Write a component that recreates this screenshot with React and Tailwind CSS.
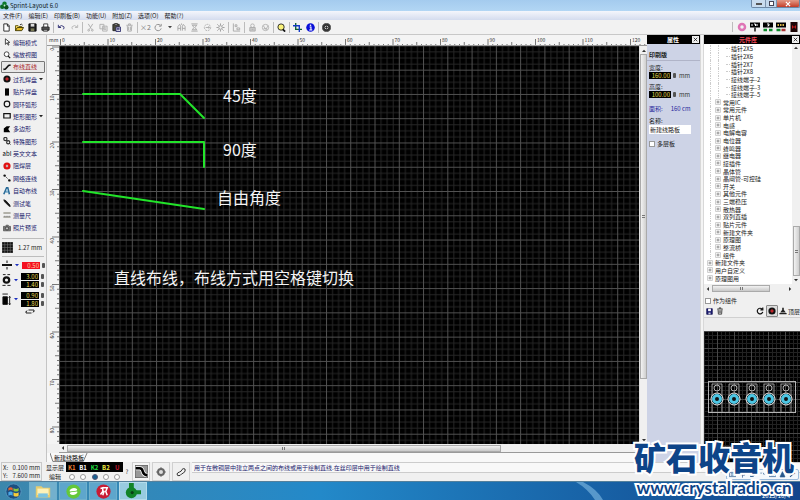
import React, { useState } from 'react';
import clsx from 'clsx';

const menus = ['文件(F)', '编辑(E)', '印刷板(B)', '功能(U)', '附加(Z)', '选项(O)', '帮助(?)'];

const Svg = ({ size = 'size-[10px]', children, ...rest }) => (
  <svg viewBox="0 0 20 20" className={clsx(size, 'block shrink-0')} fill="none" stroke="currentColor" strokeWidth="2" aria-hidden="true" {...rest}>
    {children}
  </svg>
);

const glyphs = {
  new: <path d="M4 2h8l4 4v12H4zM12 2v5h4" stroke="#222" fill="#fff" />,
  open: <><path d="M1 17V6h6l2 2h6v3" fill="#ffe36a" stroke="#554a00" /><path d="M1 17l4-7h14l-4 7z" fill="#e8bf28" stroke="#3c3500" /><path d="M11 4q4-3 6 1" stroke="#222" /></>,
  save: <><path d="M2 2h16v16H2z" fill="#222" stroke="#000" /><path d="M6 2h8v6H6z" fill="#ddd" stroke="none" /><path d="M6 12h8v6H6z" fill="#7a7a55" stroke="none" /></>,
  saveBlue: <><path d="M2 2h16v16H2z" fill="#1d1d70" stroke="#101050" /><path d="M6 2h8v7H6z" fill="#fff" stroke="none" /><path d="M7 13h6v5H7z" fill="#ccd" stroke="none" /></>,
  print: <><path d="M6 9V2h9v7" fill="#fff" stroke="#333" /><path d="M2 9h16v7H2z" fill="#555" stroke="#222" /><path d="M5 14h10v4H5z" fill="#ddd" stroke="#222" /></>,
  undo: <path d="M3 4v6h6M4 9q6-6 11-1q2 3-1 6" stroke="#28286e" />,
  redo: <path d="M17 4v6h-6M16 9q-6-6-11-1q-2 3 1 6" stroke="#b5b5b5" />,
  cut: <><path d="M5 2l7 11M15 2L8 13" stroke="#aaa" /><circle cx="6" cy="16" r="2" stroke="#aaa" /><circle cx="14" cy="16" r="2" stroke="#aaa" /></>,
  copy: <path d="M2 3h9v10H2zM8 7h10v11H8zM10 11h6M10 14h6" stroke="#b0b0b0" fill="#eee" />,
  paste: <><path d="M2 3h14v14H2z" fill="#4a4a3a" stroke="#222" /><path d="M6 1h6v4H6z" fill="#aaa" stroke="#333" /><path d="M9 9h10v10H9zM11 12h6M11 15h6" fill="#fff" stroke="#29296b" /></>,
  trash: <path d="M3 5h14M8 5V2h4v3M5 6l1 12h8l1-12M8 8v8M12 8v8" stroke="#aaa" />,
  trashDark: <path d="M3 5h14M8 5V2h4v3M5 6l1 12h8l1-12M8 8v8M12 8v8" stroke="#333" />,
  rotate: <path d="M16 12a7 7 0 1 1-2-7M16 2v5h-5" stroke="#888" />,
  rotateDark: <path d="M17 12a7 7 0 1 1-2-7M17 1v6h-6" stroke="#111" strokeWidth="3" />,
  mirror: <path d="M2 17V8l4-5 2 4v10M18 17V8l-4-5-2 4v10M2 12h6M12 12h6M10 1v3" stroke="#a5a5a5" />,
  flip: <path d="M3 2h14M3 18h14M5 5h10l-4 5 4 5H5l4-5z" stroke="#a5a5a5" />,
  loop: <><circle cx="10" cy="10" r="7" stroke="#aaa" strokeDasharray="4 2" /><path d="M6 10h8M12 7l3 3-3 3" stroke="#aaa" /></>,
  sun: <><circle cx="10" cy="10" r="4" stroke="#999" /><path d="M10 1v4M10 15v4M1 10h4M15 10h4M3 3l3 3M14 14l3 3M17 3l-3 3M3 17l3-3" stroke="#999" /></>,
  align: <path d="M3 1v17h15M7 4h4v4H7zM11 11h6v4h-6z" stroke="#a8a8a8" />,
  lock: <><circle cx="10" cy="6" r="4" stroke="#b0b0b0" /><path d="M4 10h12v8H4zM8 14h4" fill="#ccc" stroke="#aaa" /></>,
  hatch: <><circle cx="10" cy="10" r="7" stroke="#b0b0b0" /><path d="M5 6l6 8 5-8M6 12l8 2" stroke="#b0b0b0" /></>,
  zoom: <><circle cx="9" cy="9" r="7" fill="#fbf37a" stroke="#222" /><path d="M13 14l5 5" stroke="#111" strokeWidth="4" /></>,
  crop: <><path d="M6 0v14h14" stroke="#0d5f33" strokeWidth="3" /><path d="M0 6h14v14" stroke="#1238c6" strokeWidth="3" /></>,
  info: <><circle cx="10" cy="10" r="9.5" fill="#0a10d8" stroke="none" /><path d="M8 9h3v6M7 15.500h7" stroke="#fff" strokeWidth="2.500" /><circle cx="10" cy="5" r="1.800" fill="#fff" stroke="none" /></>,
  target: <><circle cx="10" cy="10" r="9" fill="#333" stroke="#555" /><circle cx="10" cy="10" r="4" fill="#ddd" stroke="none" /><path d="M10 7v6M7 10h6" stroke="#222" /></>,
  pink: <circle cx="10" cy="10" r="6" stroke="#df75b5" strokeWidth="5" />,
  cam1: <><path d="M0 1h20v10H0z" fill="#000" stroke="none" /><path d="M4 4v4M8 4h3v4M14 4v4" stroke="#fff" /><path d="M10 11v8" stroke="#111" strokeWidth="3" /></>,
  cam2: <><path d="M0 1h20v10H0z" fill="#000" stroke="none" /><path d="M8 4h4v3h-2v2" stroke="#fff" /><path d="M1 16h7M12 16h7" stroke="#0b8a2a" strokeWidth="5" /></>,
  cam3: <><path d="M0 1h20v10H0z" fill="#000" stroke="none" /><path d="M3 6h14" stroke="#d9b54a" strokeWidth="4" strokeDasharray="3 2" /><path d="M1 16h8" stroke="#0b8a2a" strokeWidth="5" /><path d="M11 16h8" stroke="#a33" strokeWidth="5" /></>,
  cam4: <><path d="M3 0h14v20H3z" fill="#1c0505" stroke="none" /><path d="M7 7v6M7 10h6M13 7v6" stroke="#c01818" strokeWidth="2" /></>,
  cursor: <path d="M6 2v14l4-4 3 6 2-1-3-6h5z" fill="#fff" stroke="#222" />,
  lens: <><circle cx="9" cy="8" r="6" stroke="#222" fill="#fff" /><path d="M13 13l5 5" stroke="#111" strokeWidth="3" /></>,
  line: <path d="M1 16l5-1 8-9 5-1" stroke="#111" strokeWidth="4" />,
  pad: <><circle cx="10" cy="10" r="9" fill="#111" stroke="none" /><circle cx="10" cy="10" r="3" fill="#a01020" stroke="#d33" /></>,
  smd: <path d="M5 1h10v18H5z" fill="#050505" stroke="none" />,
  ring: <circle cx="10" cy="10" r="7" stroke="#111" strokeWidth="3" />,
  rect: <path d="M2 4h16v11H2z" stroke="#111" strokeWidth="3" />,
  poly: <path d="M2 18V9l7-6h9l-5 7 5 8z" fill="#000" stroke="none" />,
  special: <><circle cx="6" cy="5" r="4" stroke="#333" strokeWidth="3" /><circle cx="13" cy="13" r="4" stroke="#333" strokeWidth="3" /><path d="M9 8l3 3M17 17l2 2" stroke="#222" /></>,
  mask: <><circle cx="10" cy="10" r="6" fill="#fff" stroke="#e01010" strokeWidth="6" /><path d="M8 10h4" stroke="#500" /></>,
  net: <><path d="M4 4l12 12" stroke="#333" strokeDasharray="3 2" /><circle cx="4" cy="4" r="3" fill="#111" stroke="none" /><circle cx="16" cy="16" r="3" fill="#111" stroke="none" /></>,
  auto: <><path d="M2 18L9 2h3l4 16M6 12h8" stroke="#2c6c99" strokeWidth="4" /><path d="M7 15l3-9 2 9" stroke="#9cc8df" /></>,
  probe: <path d="M2 2l5 2 10 11 1 4-4-2L4 7z" fill="#111" stroke="#111" />,
  measure: <><path d="M1 5h18M1 15h18" stroke="#54523c" /><path d="M4 12v3M8 12v3M12 12v3M16 12v3" stroke="#888" /></>,
  photo: <><path d="M1 6h5l2-3h5l2 3h4v11H1z" fill="#777" stroke="#555" /><circle cx="10" cy="11" r="4" fill="#bbb" stroke="#333" /></>,
};

const Glyph = ({ name, size }) => <Svg size={size}>{glyphs[name]}</Svg>;

const toolbar = [
  ['new', 'open', 'save', 'print'],
  ['undo', 'redo'],
  ['cut', 'copy', 'paste', 'trash'],
  ['x2', 'rotate', 'more', 'mirror', 'flip', 'loop', 'sun'],
  ['align'],
  ['lock', 'hatch'],
  ['zoom'],
  ['crop', 'info'],
  ['target'],
];

const tools = [
  { icon: 'cursor', label: '编辑模式' },
  { icon: 'lens', label: '缩放视图' },
  { icon: 'line', label: '布线直线' },
  { icon: 'pad', label: '过孔焊盘', drop: true },
  { icon: 'smd', label: '贴片焊盘' },
  { icon: 'ring', label: '圆环弧形' },
  { icon: 'rect', label: '矩形图形', drop: true },
  { icon: 'poly', label: '多边形' },
  { icon: 'special', label: '特殊图形' },
  { icon: 'text', label: '英文文本' },
  { icon: 'mask', label: '阻焊层' },
  { icon: 'net', label: '网络连线' },
  { icon: 'auto', label: '自动布线' },
  { icon: 'probe', label: '测试笔' },
  { icon: 'measure', label: '测量尺' },
  { icon: 'photo', label: '照片预览' },
];

const leaves = ['插针2X5', '插针2X6', '插针2X7', '插针2X8', '接线端子-2', '接线端子-3', '接线端子-5'];
const groups = [
  '常用IC', '常用元件', '单片机', '电感', '电解电容', '电位器', '蜂鸣器', '继电器', '接插件', '晶体管', '晶闸管-可控硅',
  '开关', '其他元件', '三端稳压', '散热器', '双列直插', '贴片元件', '新建文件夹', '原理图', '整流桥', '组件',
];
const roots = ['新建文件夹', '用户自定义', '原理图用'];

const layers = [
  { name: 'K1', color: 'text-[#f08030]' },
  { name: 'B1', color: 'text-white' },
  { name: 'K2', color: 'text-[#20e040]' },
  { name: 'B2', color: 'text-[#f0e840]' },
  { name: 'U', color: 'text-[#c01830]' },
];

function TitleBar() {
  return (
    <header className="flex h-[11px] items-center gap-px bg-linear-to-b from-[#a4cbee] to-[#b2d6f4]">
      <Svg size="size-[9px]" stroke="none">
        <circle cx="10" cy="6" r="5" fill="#0c7a2c" />
        <circle cx="5" cy="13" r="5" fill="#0a6a24" />
        <circle cx="14" cy="14" r="5" fill="#094f1c" />
        <circle cx="10" cy="10" r="2" fill="#bfe8c4" />
      </Svg>
      <h1 className="text-[6px] leading-[9px] text-[#101820]">Sprint-Layout 6.0</h1>
      <div className="ml-auto flex h-[8px] self-start overflow-hidden rounded-b-[2px] border border-t-0 border-[#6c87a5]">
        <button aria-label="最小化" className="flex w-[13px] items-end justify-center bg-[#c9dcef] pb-[2px]">
          <span className="h-[2px] w-[6px] border border-[#555] bg-white" />
        </button>
        <button aria-label="还原" className="flex w-[12px] items-center justify-center border-x border-[#7c93ad] bg-[#c2d7ec]">
          <span className="size-[5px] border border-[#445] bg-white" />
        </button>
        <button aria-label="关闭" className="flex w-[22px] items-center justify-center bg-linear-to-b from-[#e29a88] to-[#c33a26]">
          <Svg size="size-[6px]" stroke="#fff" strokeWidth="4"><path d="M3 3l14 14M17 3L3 17" /></Svg>
        </button>
      </div>
    </header>
  );
}

function Toolbar() {
  return (
    <div className="flex h-[15px] items-center border-b border-[#c8c8c8] bg-[#f2f2f2]">
      {toolbar.map((group, i) => (
        <div key={i} className="flex items-center">
          {i > 0 && <span className="mx-px h-[11px] w-px bg-[#bcbcbc]" />}
          {group.map((name) =>
            name === 'more' ? (
              <button key={name} aria-label={name} className="flex w-[10px] justify-center">
                <Svg size="size-[4px]" stroke="none"><path d="M0 5h20L10 16z" fill="#444" /></Svg>
              </button>
            ) : (
              <button key={name} aria-label={name} className="flex h-[13px] w-[13px] items-center justify-center text-[7px] leading-[11px] text-[#777]">
                {name === 'x2' ? '×2' : <Glyph name={name} size="size-[9px]" />}
              </button>
            )
          )}
        </div>
      ))}
      <div className="ml-auto flex items-center border-l border-[#bcbcbc] pl-[2px]">
        {['pink', 'cam1', 'cam2', 'cam3', 'cam4'].map((name) => (
          <button key={name} aria-label={name} className="flex w-[13px] justify-center">
            <Glyph name={name} size="size-[10px]" />
          </button>
        ))}
      </div>
    </div>
  );
}

const Stepper = () => <span className="h-[5px] w-[3px] rounded-[1px] bg-[#555]" />;

function ValueBox({ label, value, red }) {
  return (
    <div className="flex items-center gap-[2px]">
      <input
        aria-label={label}
        defaultValue={value}
        className={clsx('h-[7px] w-[18px] pr-px text-right text-[6px] leading-[7px]', red ? 'bg-[#f41020] text-[#ffd0a0]' : 'bg-black text-[#e4dc50]')}
      />
      <Stepper />
    </div>
  );
}

const BlueCaret = () => (
  <Svg size="size-[4px]" stroke="none"><path d="M0 5h20L10 16z" fill="#1c2fc0" /></Svg>
);

function Sidebar({ tool, setTool }) {
  return (
    <aside className="flex w-[47px] shrink-0 flex-col border-r border-[#c4c4c4] bg-[#f0f0f0]">
      <nav className="mt-px flex h-[198px] flex-col">
        {tools.map((t) => (
          <button
            key={t.label}
            onClick={() => setTool(t.label)}
            className={clsx(
              'mx-px flex flex-1 items-center rounded-[1px] border text-[6px] leading-[9px]',
              tool === t.label ? 'border-[#777] bg-[#e8e8e8] text-[#a81c28]' : 'border-transparent text-[#20206c]'
            )}
          >
            <span className="flex w-[10px] items-center justify-center">
              {t.icon === 'text' ? <span className="text-[6px] text-black">abI</span> : <Glyph name={t.icon} size="size-[8px]" />}
            </span>
            <span className="pl-px">{t.label}</span>
            {t.drop && <span className="ml-auto pr-px"><Svg size="size-[4px]" stroke="none"><path d="M0 5h20L10 16z" fill="#222" /></Svg></span>}
          </button>
        ))}
      </nav>
      <button className="mx-[2px] mt-1 flex h-[19px] items-center gap-[5px] border-y border-[#bdbdbd] text-[6px] text-[#222]">
        <Svg size="size-[11px]" stroke="#777" strokeWidth="1">
          <path d="M0 0h20v20H0z" fill="#111" />
          <path d="M5 0v20M10 0v20M15 0v20M0 5h20M0 10h20M0 15h20" />
        </Svg>
        1.27 mm
      </button>
      <div className="mx-[2px] mt-1 flex flex-col gap-[3px]">
        <div className="flex h-[8px] items-center gap-[3px]">
          <Svg><path d="M0 10h20" strokeWidth="4" stroke="#111" /><path d="M10 1v5M10 19v-5" stroke="#111" /></Svg>
          <BlueCaret />
          <ValueBox label="线宽" value="0.50" red />
        </div>
        <div className="flex h-[16px] items-center gap-[3px]">
          <svg viewBox="0 0 20 28" className="h-[14px] w-[10px]" fill="none" stroke="#111" strokeWidth="2" aria-hidden="true">
            <path d="M2 2h6M12 2h6M1 26h7M12 26h7" />
            <circle cx="10" cy="14" r="6" strokeWidth="5" />
          </svg>
          <BlueCaret />
          <div className="flex flex-col gap-px">
            <ValueBox label="焊盘外径" value="3.00" />
            <ValueBox label="焊盘内径" value="1.40" />
          </div>
        </div>
        <div className="flex h-[16px] items-center gap-[3px]">
          <svg viewBox="0 0 20 28" className="h-[14px] w-[10px]" stroke="#111" strokeWidth="2" aria-hidden="true">
            <path d="M1 3h12M17 9v17M15 11l2-3 2 3M15 24l2 3 2-3" fill="none" />
            <path d="M2 9h10v17H2z" fill="#000" />
          </svg>
          <BlueCaret />
          <div className="flex flex-col gap-px">
            <ValueBox label="贴片宽度" value="0.90" />
            <ValueBox label="贴片高度" value="1.80" />
          </div>
        </div>
      </div>
      <button aria-label="交换" className="mt-[2px] ml-[25px] w-[10px]">
        <svg viewBox="0 0 20 10" className="h-[5px] w-[10px]" fill="none" stroke="#222" strokeWidth="2" aria-hidden="true">
          <path d="M7 2h11v3M13 8H2V5M4 3L2 6M16 7l2-3" />
        </svg>
      </button>
    </aside>
  );
}

const STEP = 47.5;
const marks = Array.from({ length: 400 }, (_, i) => i);

function tickLength(i) {
  if (i % 10 === 0) return 7;
  return i % 5 === 0 ? 4 : 2;
}

function RulerTop() {
  return (
    <div className="flex h-[11px] border-b border-[#999] bg-[#f4f4f4]">
      <span className="w-[12px] shrink-0 pl-[2px] text-[5px] leading-[10px] text-[#333]">mm</span>
      <svg className="h-full w-0 flex-1" aria-hidden="true">
        {marks.map((i) => (
          <path key={i} d={`M${1.5 + (i * STEP) / 10} 11v-${tickLength(i)}`} stroke="#777" strokeWidth="1" />
        ))}
        {marks.filter((i) => i % 10 === 0 && i < 130).map((i) => (
          <text key={i} x={3 + (i * STEP) / 10} y="7" fontSize="5" fill="#333">{i}</text>
        ))}
      </svg>
    </div>
  );
}

function RulerLeft() {
  return (
    <svg className="w-[12px] shrink-0 self-stretch bg-[#f4f4f4]" height="100%" aria-hidden="true">
      {marks.map((i) => (
        <path key={i} d={`M12 ${1 + (i * STEP) / 10}h-${tickLength(i)}`} stroke="#777" strokeWidth="1" />
      ))}
      {marks.filter((i) => i % 10 === 0 && i < 90).map((i) => (
        <text key={i} transform={`translate(7 ${2 + (i * STEP) / 10}) rotate(-90)`} textAnchor="end" fontSize="5" fill="#333">{i}</text>
      ))}
    </svg>
  );
}

// board coordinates, origin at the upper left corner of the sheet
function Board() {
  return (
    <div className="relative h-full w-0 flex-1 bg-black">
      <svg className="absolute inset-0 size-full" role="img" aria-label="新建线路板">
        <defs>
          <pattern id="grid" width="24.27" height="24.27" patternUnits="userSpaceOnUse" y="-0.600">
            <path d="M6.570 0v24.270M12.630 0v24.270M18.700 0v24.270M0 6.570h24.270M0 12.630h24.270M0 18.700h24.270" stroke="#262626" strokeWidth="1" />
            <path d="M0.500 0v24.270M0 0.500h24.270" stroke="#525252" strokeWidth="1" />
          </pattern>
        </defs>
        <rect width="100%" height="100%" fill="url(#grid)" />
        <g fill="none" stroke="#22e42a" strokeWidth="2" strokeLinecap="round" strokeLinejoin="round">
          <path d="M24 48H121L145 72" />
          <path d="M24 96H145V121" />
          <path d="M24 145L145 163" />
        </g>
        <g fill="#f4f4f4" fontSize="16">
          <text x="164" y="56">45度</text>
          <text x="164" y="110">90度</text>
          <text x="158" y="158">自由角度</text>
          <text x="55" y="238">直线布线，布线方式用空格键切换</text>
        </g>
      </svg>
    </div>
  );
}

const Arrow = ({ d }) => (
  <Svg size="size-[4px]" stroke="none"><path d={d} fill="#333" /></Svg>
);

function Workspace() {
  return (
    <main className="flex w-0 flex-1 flex-col bg-[#f0f0f0]">
      <RulerTop />
      <div className="flex min-h-0 flex-1">
        <RulerLeft />
        <Board />
        <div className="flex w-[8px] flex-col items-center border-l border-[#ddd] bg-[#f0f0f0] py-px">
          <span className="flex h-[7px] items-center"><Arrow d="M0 15h20L10 4z" /></span>
          <div className="flex h-[82%] w-[7px] flex-col items-center justify-center gap-px border border-[#aaa] bg-linear-to-r from-[#f2f2f2] to-[#cfcfcf]">
            <span className="h-px w-[3px] bg-[#777]" />
            <span className="h-px w-[3px] bg-[#777]" />
          </div>
          <span className="mt-auto flex h-[7px] items-center"><Arrow d="M0 5h20L10 16z" /></span>
        </div>
      </div>
      <div className="ml-[12px] flex h-[9px] items-center border-b border-[#999] bg-[#f0f0f0] pr-[10px]">
        <span className="flex w-[8px] justify-center"><Arrow d="M15 0v20L4 10z" /></span>
        <div className="flex h-[7px] w-3/4 items-center justify-center gap-px border border-[#aaa] bg-linear-to-b from-[#f2f2f2] to-[#c8c8c8]">
          <span className="h-[3px] w-px bg-[#777]" />
          <span className="h-[3px] w-px bg-[#777]" />
        </div>
      </div>
      <div className="flex h-[9px] bg-[#f8f8f8] pl-[3px]">
        <button className="relative flex items-center px-[4px] text-[6px] leading-[9px] text-black">
          <svg viewBox="0 0 40 8" preserveAspectRatio="none" className="absolute inset-0 size-full" aria-hidden="true">
            <path d="M0 0l3 7.500h32L39 0" fill="none" stroke="#555" strokeWidth="0.700" />
          </svg>
          <span className="relative">新建线路板</span>
        </button>
      </div>
    </main>
  );
}

function PanelHeader({ title, className }) {
  return (
    <div className="flex h-[9px] shrink-0 items-center bg-black">
      <h2 className={clsx('flex-1 text-center text-[6px] leading-[9px] font-bold', className)}>{title}</h2>
      <button aria-label="关闭" className="mr-px flex size-[7px] items-center justify-center bg-[#f0f0f0]">
        <Svg size="size-[5px]" stroke="#111" strokeWidth="3"><path d="M3 3l14 14M17 3L3 17" /></Svg>
      </button>
    </div>
  );
}

function SizeField({ id, label, value }) {
  return (
    <div className="mb-[3px]">
      <label htmlFor={id} className="block leading-[9px]">{label}</label>
      <div className="flex items-center gap-[2px] text-[#333]">
        <input id={id} defaultValue={value} className="h-[7px] w-[22px] bg-black pr-px text-right leading-[7px] text-[#e4dc50]" />
        <Stepper />
        <span className="pl-px leading-[7px]">mm</span>
      </div>
    </div>
  );
}

function Properties() {
  return (
    <section className="flex w-[53px] shrink-0 flex-col bg-[#cdd3e6] text-[6px] text-[#181818]">
      <PanelHeader title="属性" className="pl-[7px] text-white" />
      <h3 className="mt-[6px] border-b border-[#b0b4c8] pb-px pl-[2px] text-[6px] leading-[9px] font-bold">印刷版</h3>
      <div className="px-[2px] pt-[2px]">
        <SizeField id="board-w" label="宽度:" value="160.00" />
        <SizeField id="board-h" label="高度:" value="100.00" />
        <p className="mt-[6px] flex gap-[8px] leading-[9px] text-[#28289c]">
          <span>面积:</span>
          <span>160 cm</span>
        </p>
        <label htmlFor="board-name" className="mt-[3px] block leading-[9px]">名称:</label>
        <input id="board-name" defaultValue="新建线路板" className="h-[9px] w-[42px] bg-white pl-px leading-[9px]" />
        <label className="mt-[5px] flex items-center gap-[2px] leading-[9px]">
          <input type="checkbox" className="size-[6px] appearance-none border border-[#999] bg-white" />
          多层板
        </label>
      </div>
    </section>
  );
}

const Expander = () => (
  <Svg size="size-[6px]" stroke="#aaa" strokeWidth="2"><path d="M2 2h16v16H2z" fill="#fff" /><path d="M5 10h10M10 5v10" stroke="#555" /></Svg>
);

function Tree() {
  return (
    <div className="flex h-[240px] bg-white">
      <ul className="flex flex-1 flex-col pt-px pb-[2px] text-[6px] leading-[7px] whitespace-nowrap text-[#181818]">
        {leaves.map((name) => (
          <li key={name} className="flex flex-1 items-center">
            <span className="ml-[6px] h-full w-[8px] border-l border-dotted border-[#ccc]" />
            <span className="h-full w-[8px] border-l border-dotted border-[#ccc]" />
            <span className="mr-px w-[4px] border-b border-dotted border-[#ccc]" />
            {name}
          </li>
        ))}
        {groups.map((name) => (
          <li key={name} className="flex flex-1 items-center">
            <span className="ml-[6px] h-full w-[5px] border-l border-dotted border-[#ccc]" />
            <button className="flex items-center gap-[2px]"><Expander />{name}</button>
          </li>
        ))}
        {roots.map((name) => (
          <li key={name} className="flex flex-1 items-center pl-[3px]">
            <button className="flex items-center gap-[2px]"><Expander />{name}</button>
          </li>
        ))}
      </ul>
      <div className="flex w-[8px] flex-col items-center bg-[#f0f0f0] py-[2px]">
        <Arrow d="M0 15h20L10 4z" />
        <div className="mt-auto mb-[2px] flex h-[50px] w-[7px] flex-col items-center justify-center gap-px border border-[#aaa] bg-linear-to-r from-[#f2f2f2] to-[#cfcfcf]">
          <span className="h-px w-[3px] bg-[#777]" />
          <span className="h-px w-[3px] bg-[#777]" />
        </div>
        <Arrow d="M0 5h20L10 16z" />
      </div>
    </div>
  );
}

const pins = [13, 30, 48, 65, 82];

function Preview() {
  return (
    <svg className="min-h-0 w-full flex-1 bg-black" role="img" aria-label="插针">
      <defs>
        <pattern id="fine" width="17" height="17" patternUnits="userSpaceOnUse" x="13">
          <path d="M4.500 0v17M8.500 0v17M12.500 0v17M0 4.500h17M0 8.500h17M0 12.500h17" stroke="#222" />
          <path d="M0.500 0v17M0 0.500h17" stroke="#474747" />
        </pattern>
      </defs>
      <rect width="100%" height="100%" fill="url(#fine)" />
      <g fill="none" stroke="#b4b4b4">
        <rect x="4.500" y="50.500" width="87" height="31" />
        {pins.map((x) => (
          <g key={x}>
            <path d={`M${x - 5} 81V53h10V81`} strokeWidth="0.800" />
            <circle cx={x} cy="57" r="3" />
            <circle cx={x} cy="68" r="6" fill="#111" stroke="#f4f4f4" />
            <circle cx={x} cy="68" r="3.500" stroke="#4cc6e4" strokeWidth="3" />
          </g>
        ))}
      </g>
    </svg>
  );
}

function Library() {
  return (
    <section className="flex w-[96px] shrink-0 flex-col bg-[#f0f0f0]">
      <PanelHeader title="元件库" className="text-[#f04858]" />
      <Tree />
      <div className="flex h-[9px] items-center bg-[#f0f0f0] pr-[8px]">
        <span className="flex w-[8px] justify-center"><Arrow d="M15 0v20L4 10z" /></span>
        <div className="flex h-[7px] w-[58px] items-center justify-center gap-px border border-[#aaa] bg-linear-to-b from-[#f2f2f2] to-[#c8c8c8]">
          <span className="h-[3px] w-px bg-[#777]" />
          <span className="h-[3px] w-px bg-[#777]" />
        </div>
        <span className="ml-auto"><Arrow d="M5 0v20L16 10z" /></span>
      </div>
      <label className="mt-[3px] flex items-center gap-[2px] pl-px text-[6px] leading-[9px] text-[#222]">
        <input type="checkbox" className="size-[6px] appearance-none border border-[#999] bg-white" />
        作为组件
      </label>
      <div className="flex h-[12px] items-center text-[6px] leading-[9px] text-[#222]">
        <button aria-label="保存" className="ml-[2px]"><Glyph name="saveBlue" size="size-[7px]" /></button>
        <button aria-label="删除" className="ml-[3px]"><Glyph name="trashDark" size="size-[8px]" /></button>
        <button aria-label="旋转" className="ml-auto"><Glyph name="rotateDark" size="size-[8px]" /></button>
        <button aria-label="焊盘" className="ml-[2px] rounded-[1px] border border-[#888] bg-[#ddd] p-px"><Glyph name="pad" size="size-[8px]" /></button>
        <button className="ml-px flex items-center gap-px whitespace-nowrap">
          <Svg size="size-[8px]" stroke="none"><path d="M8 2h4v5l5 7H3l5-7zM1 15h18v3H1z" fill="#222" /></Svg>
          顶层
        </button>
      </div>
      <div className="h-[14px] border-t border-[#d0d0d0] bg-[#ececec]" />
      <Preview />
    </section>
  );
}

function StatusBar({ layer, setLayer }) {
  return (
    <footer className="flex h-[19px] items-stretch bg-[#f0f0f0] text-[6px] text-[#181818]">
      <dl className="ml-px grid w-[41px] grid-cols-[6px_1fr] content-center border border-[#c8c8c8] px-px leading-[8px] whitespace-nowrap">
        <dt>X:</dt><dd className="text-right">0.100 mm</dd>
        <dt>Y:</dt><dd className="text-right">7.600 mm</dd>
      </dl>
      <div className="ml-[2px] flex w-[22px] flex-col items-center justify-center leading-[9px]">
        <span>显示层</span>
        <span>编辑</span>
      </div>
      <div className="flex w-[57px]">
        {layers.map((l) => (
          <label key={l.name} className="flex flex-1 flex-col items-center">
            <span className={clsx('flex h-[10px] w-full items-center justify-center bg-black leading-[9px] font-bold', l.color)}>{l.name}</span>
            <input
              type="radio"
              name="layer"
              checked={layer === l.name}
              onChange={() => setLayer(l.name)}
              className="mt-[2px] size-[6px] appearance-none rounded-full border border-[#999] bg-white checked:border-[#557] checked:bg-[#186090]"
            />
          </label>
        ))}
      </div>
      <button aria-label="帮助" className="w-[8px] text-[#333]">?</button>
      <div className="ml-px flex gap-[2px]">
        <button aria-label="布线" className="flex w-[18px] items-center justify-center border border-[#d0d0d0] bg-[#f6f6f6]">
          <Svg size="size-[13px]"><path d="M0 0h20v20H0z" fill="#999" stroke="#666" /><path d="M1 5h6q4 0 5 5t7 6" stroke="#fff" strokeWidth="6" /><path d="M1 5h6q4 0 5 5t7 6" stroke="#000" strokeWidth="4" /></Svg>
        </button>
        <button aria-label="焊盘" className="flex w-[18px] items-center justify-center border border-[#d0d0d0]">
          <Svg><path d="M10 0v20M0 10h20" stroke="#777" /><circle cx="10" cy="10" r="6" stroke="#666" strokeWidth="4" fill="#ddd" /></Svg>
        </button>
        <button aria-label="走线" className="flex w-[18px] items-center justify-center border border-[#d0d0d0]">
          <Svg><path d="M2 14q0 5 6 3 3-4 7-5 5-4 3-8-4-2-6 1-1 4-5 5-4 1-5 4z" stroke="#333" /></Svg>
        </button>
      </div>
      <div className="ml-[2px] flex-1">
        <p className="border-y border-[#ccc] bg-[#f8f8f8] pl-[2px] leading-[9px] text-[#20206c]">
          用于在敷铜层中建立两点之间的布线或用于绘制直线.在丝印层中用于绘制直线
        </p>
      </div>
    </footer>
  );
}

function Taskbar() {
  return (
    <div className="flex h-[19px] items-stretch gap-[2px] border-t border-[#54809c] bg-linear-to-r from-[#3c87ac] via-[#2389c9] via-40% to-[#12458c]">
      <button aria-label="开始" className="flex w-[27px] items-center justify-center">
        <Svg size="size-[17px]" stroke="none">
          <circle cx="10" cy="10" r="9" fill="#1c4f80" stroke="#5c9cc4" strokeWidth="1" />
          <path d="M4 6q3-2 5 0v3q-2-2-5 0z" fill="#e8602c" />
          <path d="M10 6q3 2 6 0v3q-3 2-6 0z" fill="#8cc63c" />
          <path d="M4 11q3-2 5 0v4q-2-2-5 0z" fill="#48a8e8" />
          <path d="M10 11q3 2 6 0v4q-3 2-6 0z" fill="#f8cc38" />
        </Svg>
      </button>
      <button aria-label="资源管理器" className="flex w-[28px] items-center justify-center border border-[#6fb0cc] bg-[#73b0cd]">
        <Svg size="size-[16px]" stroke="none"><path d="M1 4h7l2 2h9v12H1z" fill="#e5cc70" /><path d="M3 7h14v8H3z" fill="#fdf2b8" /><path d="M4 13h12v5H4z" fill="#7cc4e0" /></Svg>
      </button>
      <button aria-label="浏览器" className="flex w-[28px] items-center justify-center border border-[#6fb0cc] bg-[#5ea6cc]">
        <Svg size="size-[15px]" stroke="none"><circle cx="10" cy="10" r="9.500" fill="#64c83a" /><path d="M5 8q5-5 10-1l-1 2-9 1zM15 12q-5 5-10 1l1-2 9-1z" fill="#fff" /></Svg>
      </button>
      <button aria-label="音乐" className="flex w-[28px] items-center justify-center border border-[#6fb0cc] bg-[#5ea6cc]">
        <Svg size="size-[15px]" stroke="none"><circle cx="10" cy="10" r="9.500" fill="#c81c34" /><path d="M6 6l3-1v5l-3 4M10 5h5l-2 5 2 5M11 9l-2 6" fill="none" stroke="#fff" strokeWidth="2" /></Svg>
      </button>
      <button aria-label="Sprint-Layout" className="flex w-[28px] items-center justify-center border border-[#b4dcec] bg-[#98cbe0]">
        <Svg size="size-[16px]" stroke="none"><circle cx="8" cy="12" r="7" fill="#128428" /><path d="M5 0h6v8H5zM12 9h8v5h-8z" fill="#128428" /><circle cx="9" cy="12" r="2" fill="#0a4014" /></Svg>
      </button>
      <div className="flex flex-1 justify-end pr-[140px]">
        <svg viewBox="0 0 60 18" className="h-full w-[60px]" aria-hidden="true">
          <path d="M16 0h7q14 7 20 18h-8Q28 7 16 0z" fill="#8cc4ea" opacity="0.550" />
        </svg>
      </div>
      <time className="mr-[10px] self-end text-[6px] leading-[9px] text-white">2015/10/4</time>
    </div>
  );
}

function Watermark() {
  return (
    <a
      href="#crystalradio"
      className="absolute right-[6px] bottom-px flex flex-col items-center gap-[2px] font-black text-[#0d4488] [-webkit-text-stroke:4px_white] [paint-order:stroke_fill]"
    >
      <span className="text-[32px] leading-[38px]">矿石收音机</span>
      <span className="font-['Lato','Noto_Sans_CJK_SC',sans-serif] text-[17px] leading-[22px] font-bold">www.crystalradio.cn</span>
    </a>
  );
}

export default function App() {
  const [tool, setTool] = useState('布线直线');
  const [layer, setLayer] = useState('K2');

  return (
    <div className="relative flex h-screen flex-col overflow-hidden bg-[#f0f0f0] font-['Noto_Sans_CJK_SC',sans-serif]">
      <TitleBar />
      <nav className="flex h-[9px] items-center gap-[6px] bg-linear-to-b from-[#f4f6fc] to-[#d4dcee] pl-[3px] text-[6px] leading-[9px] text-[#181818]">
        {menus.map((m) => <button key={m}>{m}</button>)}
      </nav>
      <Toolbar />
      <div className="flex min-h-0 flex-1">
        <Sidebar tool={tool} setTool={setTool} />
        <Workspace />
        <Properties />
        <div className="w-[4px] shrink-0 border-x border-[#d8d8d8] bg-[#f4f4f4]" />
        <Library />
      </div>
      <StatusBar layer={layer} setLayer={setLayer} />
      <Taskbar />
      <div className="absolute right-px bottom-[20px] flex h-[11px] w-[73px] items-center justify-around rounded-[2px] border border-[#9cbcdc] bg-[#f4f8fc] text-[#28588c]">
        <Svg size="size-[7px]"><path d="M1 4h18v12H1zM5 8h10M5 12h10" /></Svg>
        <Svg size="size-[7px]"><path d="M4 4h12v8H4zM10 1v18" /></Svg>
        <Svg size="size-[7px]"><path d="M14 3q2 11-11 12q13 4 14-8z" fill="#28588c" /></Svg>
        <Svg size="size-[7px]"><path d="M4 6h4M12 5l3 6" /></Svg>
        <Svg size="size-[7px]"><path d="M1 5h18v11H1zM4 9h12M6 13h8" /></Svg>
        <Svg size="size-[7px]"><path d="M10 2l3 6 4 9H3l4-9z" fill="#28588c" /></Svg>
        <Svg size="size-[7px]"><path d="M3 17L14 6M12 3l5 5" strokeWidth="3" /></Svg>
      </div>
      <Watermark />
    </div>
  );
}
